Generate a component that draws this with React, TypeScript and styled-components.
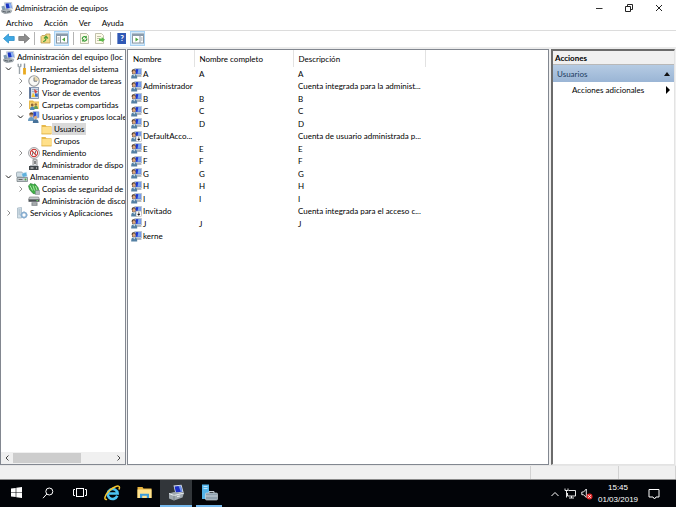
import React from "react";
import styled, { createGlobalStyle, css } from "styled-components";

const GlobalStyle = createGlobalStyle`
  * { box-sizing: border-box; }
  html, body, #root { height: 100%; margin: 0; }
  body {
    background: #f0f0f0;
    color: #000;
    font: 8px/12px Lato, "Open Sans", sans-serif;
    overflow: hidden;
  }
  button { font: inherit; color: inherit; border: 0; padding: 0; margin: 0; background: none; }
  svg { display: block; flex: none; }
`;

const Desktop = styled.div`
  display: flex;
  flex-direction: column;
  height: 100vh;
`;

const TitleBar = styled.header`
  display: flex;
  align-items: center;
  height: 15px;
  padding: 0 2px 0 1px;
  gap: 2px;
  background: #fff;
`;

const Title = styled.h1`
  flex: 1;
  margin: 0;
  font-size: 8px;
  font-weight: 400;
`;

const CaptionGroup = styled.div`
  display: flex;
`;

const CaptionButton = styled.button`
  display: flex;
  align-items: center;
  justify-content: center;
  width: 30px;
  height: 14px;
`;

const MenuBar = styled.nav`
  display: flex;
  align-items: center;
  height: 15px;
  padding-left: 6px;
  gap: 11px;
  background: #fff;
`;

const ToolBar = styled.div`
  display: flex;
  align-items: center;
  height: 19px;
  padding: 0 1px 1px 2px;
  gap: 2px;
  background: #fff;
  border-top: 1px solid #dcdcdc;
  border-bottom: 2px solid #ececec;
`;

const ToolButton = styled.button<{ $active?: boolean }>`
  display: flex;
  align-items: center;
  justify-content: center;
  width: ${(p) => (p.$active ? 15 : 13)}px;
  height: 15px;
  ${(p) =>
    p.$active &&
    css`
      background: #d5eafb;
      border: 1px solid #a9d3f5;
    `}
`;

const ToolDivider = styled.span`
  width: 1px;
  height: 13px;
  margin: 0 2px;
  background: #b4b4b4;
`;

const Workspace = styled.main`
  flex: 1;
  min-height: 0;
  display: grid;
  grid-template-columns: 126px minmax(0, 1fr) 124px;
  column-gap: 1px;
  padding-right: 1px;
`;

const Pane = styled.section`
  display: flex;
  flex-direction: column;
  min-width: 0;
  background: #fff;
  border: 1px solid #828790;
  overflow: hidden;
`;

const ListPane = styled(Pane)`
  margin-right: 1px;
`;

const ActionsPane = styled(Pane)`
  border-color: #6b6b6b #e3e3e3 #e3e3e3 #6b6b6b;
  border-width: 2px 1px 1px 2px;
`;

const Tree = styled.ul`
  flex: 1;
  margin: 0;
  padding: 1px 0 0;
  list-style: none;
`;

const TreeRow = styled.li<{ $level: number }>`
  display: flex;
  align-items: center;
  height: 12px;
  padding-left: ${(p) => (p.$level === 0 ? 2 : p.$level * 12 - 9)}px;
  white-space: nowrap;
`;

const Twisty = styled.button`
  flex: none;
  display: flex;
  align-items: center;
  justify-content: center;
  width: 9px;
  height: 12px;
  margin-right: 3px;
`;

const TwistySpace = styled.span`
  flex: none;
  width: 12px;
`;

const TreeIcon = styled.span`
  flex: none;
  display: flex;
  align-items: center;
  justify-content: center;
  width: 12px;
  height: 12px;
`;

const TreeLabel = styled.span<{ $selected?: boolean }>`
  height: 12px;
  padding: 0 2px;
  ${(p) => p.$selected && "background: #d9d9d9;"}
`;

const ScrollBar = styled.div`
  display: flex;
  align-items: center;
  height: 12px;
  background: #f0f0f0;
`;

const ScrollArrow = styled.button`
  display: flex;
  align-items: center;
  justify-content: center;
  width: 12px;
  height: 12px;
`;

const ScrollTrack = styled.div`
  flex: 1;
  height: 10px;
`;

const ScrollThumb = styled.div`
  width: 68%;
  height: 10px;
  background: #cdcdcd;
`;

const UserTable = styled.table`
  width: 297px;
  table-layout: fixed;
  border-collapse: collapse;
`;

const HeadCell = styled.th<{ $width: number }>`
  width: ${(p) => p.$width}px;
  height: 17px;
  padding: 1px 0 0 5px;
  text-align: left;
  font-weight: 400;
  border-right: 1px solid #e2e2e2;
`;

const UserRow = styled.tr`
  height: 12px;
  &:nth-child(odd) { height: 13px; }
`;

const Cell = styled.td`
  padding: 0 0 0 5px;
  line-height: 12px;
  white-space: nowrap;
`;

const NameCell = styled(Cell)`
  padding: 0 0 0 3px;
`;

const NameBox = styled.span`
  display: flex;
  align-items: center;
  gap: 1px;
`;

const ActionsHead = styled.h2`
  margin: 0;
  padding-left: 2px;
  height: 14px;
  line-height: 14px;
  font-size: 8px;
  font-weight: 700;
  background: #f0f0f0;
  border-bottom: 1px solid #b8b8b8;
`;

const ActionGroup = styled.button`
  display: flex;
  align-items: center;
  justify-content: space-between;
  height: 17px;
  padding: 0 4px;
  color: #1c3a5e;
  background: linear-gradient(#b5cbe3, #9ab5d5);
`;

const ActionItem = styled.button`
  display: flex;
  align-items: center;
  justify-content: space-between;
  height: 15px;
  padding: 0 4px 0 19px;
`;

const StatusBar = styled.footer`
  display: flex;
  height: 15px;
  border-top: 1px solid #e6e6e6;
  border-bottom: 1px solid #8a8a8a;
`;

const StatusCell = styled.span<{ $width?: number }>`
  ${(p) => (p.$width ? `width: ${p.$width}px;` : "flex: 1;")}
  border-right: 1px solid #d2d2d2;
`;

const TaskBar = styled.nav`
  display: flex;
  align-items: stretch;
  height: 27px;
  background: #020408;
  color: #fff;
`;

const TaskButton = styled.button<{ $running?: boolean; $focused?: boolean }>`
  display: flex;
  align-items: center;
  justify-content: center;
  width: 32px;
  border: solid transparent;
  border-width: 0 0 2px;
  ${(p) => p.$running && "border-bottom-color: #76b9ed;"}
  ${(p) => p.$focused && "background: #32363a;"}
`;

const AppButton = styled(TaskButton)`
  width: 26px;
  margin-left: 4px;
`;

const Tray = styled.div`
  display: flex;
  align-items: center;
  margin-left: auto;
  padding-right: 16px;
  gap: 5px;
`;

const TrayButton = styled.button`
  display: flex;
`;

const Clock = styled.time`
  width: 40px;
  margin-right: 5px;
  text-align: center;
  font-family: "Liberation Sans", Arial, sans-serif;
  white-space: nowrap;
`;

type IconProps = { size?: number };

const ComputerIcon = ({ size = 12 }: IconProps) => (
  <svg width={size} height={size} viewBox="0 0 16 16">
    <path d="M4.500 1l9.500-.5 1.500 8.500-9 1.500z" fill="#e3eaf1" stroke="#9aa9b6" strokeWidth=".7" />
    <path d="M6 2l7-.5 1.200 6.300-7 1.200z" fill="#1c36c4" />
    <path d="M10 1.700l3-.2 1.200 6.300-2.500.4z" fill="#8fb4f0" />
    <path d="M.5 6l4-1.500 1.500 5.500-4 1z" fill="#7f9cb4" />
    <path d="M.5 11l6-1.500 8 2-1.500 2.800-8 1.200-4-2z" fill="#aab2b8" stroke="#767f86" strokeWidth=".6" />
    <path d="M2 12.500l5 1M8 13.500l4-.8" stroke="#4d555b" strokeWidth="1.200" />
  </svg>
);

const UserIcon = ({ disabled }: { disabled?: boolean }) => (
  <svg width="11" height="11" viewBox="0 0 12 12">
    <path d="M4 .5h7.500v7H5z" fill="#d9e3ee" stroke="#8c9db0" strokeWidth=".6" />
    <path d="M5 1.200h5.800v5.200H5z" fill="#1d36cf" />
    <path d="M8 1.200h2.800v5.200H7z" fill="#7da5ec" />
    <path d="M6 8h5l.5 1.500H6z" fill="#9aa4ad" />
    <path d="M.8 3.500C.8.8 5 .8 5 3.500L4.500 6.500h-3z" fill="#4a3728" />
    <ellipse cx="3.200" cy="4.500" rx="1.600" ry="2" fill="#dba67e" />
    <path d="M.2 11.500c0-4 1.300-4.700 3.200-4.700S6.800 7.500 6.800 11.500z" fill="#5480a3" />
    <path d="M2.500 7l1 2.200 1-2.200z" fill="#fff" />
    {disabled && (
      <g>
        <rect x="5.500" y="5.500" width="6" height="6" fill="#fff" stroke="#999" strokeWidth=".5" />
        <path d="M8.500 6.300v3M7.200 8.800h2.600l-1.300 1.500z" fill="#111" stroke="#111" strokeWidth=".6" />
      </g>
    )}
  </svg>
);

const GroupUsersIcon = () => (
  <svg width="12" height="12" viewBox="0 0 12 12">
    <path d="M5 .5l6 .3v6L5 7z" fill="#2a48cf" stroke="#b6c3d2" strokeWidth=".8" />
    <path d="M8 1l2.500.2v5.200H8z" fill="#83a9ed" />
    <circle cx="3.300" cy="4" r="2" fill="#c99a70" />
    <path d="M1.200 3.500c.3-3 4-3 4.300 0z" fill="#6a4b2d" />
    <path d="M0 10c0-3 1.500-4 3.300-4s3 1 3 4z" fill="#6d9cc0" />
    <circle cx="7.600" cy="6.500" r="1.700" fill="#d9aa80" />
    <path d="M4.800 12c0-3 1-3.800 2.800-3.800s3 .8 3 3.800z" fill="#47729a" />
  </svg>
);

const ToolsIcon = () => (
  <svg width="12" height="12" viewBox="0 0 12 12" fill="none">
    <path d="M2.200.8v2.400l1.300 1 1.300-1V.8M3.500 4v7" stroke="#9aa2a8" strokeWidth="1.400" />
    <path d="M8.500.5v5" stroke="#8d959c" strokeWidth="1.400" />
    <path d="M8.500 5V11.500" stroke="#e8a91f" strokeWidth="2.800" />
  </svg>
);

const ClockIcon = () => (
  <svg width="12" height="12" viewBox="0 0 12 12">
    <circle cx="6" cy="6" r="5.200" fill="#f8f8f5" stroke="#96999b" strokeWidth="1.100" />
    <path d="M6 6V1.500A4.500 4.500 0 0 1 10.500 6z" fill="#ead9ae" />
    <path d="M6 2.500V6.200h3" fill="none" stroke="#66717b" strokeWidth=".9" />
  </svg>
);

const EventIcon = () => (
  <svg width="12" height="12" viewBox="0 0 12 12">
    <rect x="1.500" y=".5" width="9" height="11" fill="#d5deea" stroke="#6f82a0" strokeWidth=".8" />
    <path d="M2.200 1v10" stroke="#4b6791" strokeWidth="1.500" />
    <path d="M4 2.500h6M4 4.500h6M4 9.500h6" stroke="#8799b5" strokeWidth=".7" />
    <path d="M6 2l3.500 2.500L7 7z" fill="#d8463c" />
    <path d="M5 5.500l2.500 4.500h-4z" fill="#f1c634" />
    <path d="M7 6.500h2.800v3H7z" fill="#3669c5" />
  </svg>
);

const FolderIcon = () => (
  <svg width="11" height="11" viewBox="0 0 11 11">
    <path d="M.5 1h4l1 1.200h5V10H.5z" fill="#e6b84a" />
    <path d="M1.200 3h9.300v6.800H1.200z" fill="#ffe08a" />
    <path d="M.5 10h10" stroke="#dcae41" strokeWidth=".8" />
  </svg>
);

const SharedIcon = () => (
  <svg width="12" height="12" viewBox="0 0 12 12">
    <path d="M1 1.500h4l1 1h5V10H1z" fill="#e7b94b" />
    <path d="M2 3.500h9v6.500H2z" fill="#fbd978" />
    <circle cx="4.200" cy="6" r="1.400" fill="#8c6439" />
    <circle cx="7.800" cy="5.500" r="1.300" fill="#9a7040" />
    <path d="M2 11c0-2.500.7-3.500 2.300-3.500S6.500 8.500 6.500 11z" fill="#4e89b2" />
    <path d="M6 10c0-2 .4-3.200 1.800-3.200S10 8 10 10z" fill="#5f9c58" />
  </svg>
);

const PerformanceIcon = () => (
  <svg width="12" height="12" viewBox="0 0 12 12" fill="none">
    <circle cx="6" cy="6" r="5.400" fill="#fff" stroke="#8d9194" strokeWidth=".9" />
    <circle cx="6" cy="6" r="3.600" stroke="#c9403b" strokeWidth="1.100" />
    <path d="M3.500 3.500l5 5" stroke="#c9403b" strokeWidth="1.300" />
    <path d="M4.500 8.200V5.500M7.500 6.500V4" stroke="#555" strokeWidth=".8" />
  </svg>
);

const DeviceIcon = () => (
  <svg width="12" height="12" viewBox="0 0 12 12">
    <rect x="5" y=".8" width="4" height="5.700" fill="#e4e6e8" stroke="#666" strokeWidth=".7" />
    <path d="M7 2v3" stroke="#222" />
    <rect x="1" y="7" width="9.500" height="4" fill="#41474b" />
    <path d="M2 6.500h8" stroke="#b8bec2" />
    <path d="M2.500 9h3M8 9h1" stroke="#eee" />
  </svg>
);

const StorageIcon = () => (
  <svg width="12" height="12" viewBox="0 0 12 12">
    <rect x=".5" y="1" width="6" height="5" rx="1" fill="#cfdce3" stroke="#8b9ba5" strokeWidth=".7" />
    <path d="M5.500 2.500l5-1.500.8 4.500-4.800 1z" fill="#5fb1dc" stroke="#e0eef5" strokeWidth=".6" />
    <path d="M1 6.500h10.500v4H1z" fill="#c2c9cd" stroke="#6f787d" strokeWidth=".7" />
    <path d="M2.500 8.500h4" stroke="#666" />
    <circle cx="9.500" cy="8.500" r=".9" fill="#49ad42" />
  </svg>
);

const BackupIcon = () => (
  <svg width="12" height="12" viewBox="0 0 12 12">
    <path d="M.5 3L2.500.5l3 1L7 .8l3 3.700 1 3.500-3 3-3-.5-3.500-4z" fill="#3fae46" stroke="#297a32" strokeWidth=".6" />
    <path d="M2 2.500l2.500 5M5 2.500l1.500 5M7.500 3l1.500 4" stroke="#bcebb0" strokeWidth=".9" />
    <path d="M7.500 7.500h4v4h-4z" fill="#b4bbbe" stroke="#7c8589" strokeWidth=".5" />
  </svg>
);

const DiskIcon = () => (
  <svg width="12" height="12" viewBox="0 0 12 12">
    <path d="M1.500 2h9l1 2.500H.5z" fill="#c5cacd" stroke="#777" strokeWidth=".6" />
    <path d="M.5 4.500h11v2.300H.5z" fill="#4b5155" />
    <path d="M3.500 7.300h6v3.500h-6z" fill="#80878b" />
    <path d="M4.500 9h4" stroke="#ddd" strokeWidth=".8" />
    <path d="M8.500 5.600H10" stroke="#6ed65e" />
  </svg>
);

const ServicesIcon = () => (
  <svg width="12" height="12" viewBox="0 0 12 12">
    <path d="M1.500 1l4-.5V11h-4z" fill="#d3e0e9" stroke="#9db1bf" strokeWidth=".7" />
    <path d="M2.500 3h2M2.500 5h2M2.500 7h2" stroke="#8aa2b1" strokeWidth=".7" />
    <circle cx="8" cy="8" r="2.500" fill="none" stroke="#88aed0" strokeWidth="1.600" />
    <path d="M8 4.300v1.200M8 10.500v1.200M4.300 8h1.200M10.500 8h1.200" stroke="#88aed0" />
  </svg>
);

const ArrowIcon = ({ forward }: { forward?: boolean }) => (
  <svg width="12" height="11" viewBox="0 0 12 11">
    <path
      d={forward ? "M11.500 5.500L6.500 1v2.500H.8v4h5.700V10z" : "M.5 5.500l5-4.500v2.500h5.700v4H5.500V10z"}
      fill={forward ? "#8d8d8d" : "#3ea8e4"}
      stroke={forward ? "#777" : "#2f8fca"}
      strokeWidth=".8"
    />
  </svg>
);

const UpFolderIcon = () => (
  <svg width="11" height="11" viewBox="0 0 11 11">
    <path d="M1 3.500l1-1h3L6 1h4v9H1z" fill="#f5da86" stroke="#b99a4c" strokeWidth=".8" />
    <path d="M3 8.500c2 0 3-1 3-4M4 5.500L6 3.200l2 2.300" fill="none" stroke="#4f9f3a" strokeWidth="1.200" />
  </svg>
);

const PanelIcon = ({ right }: { right?: boolean }) => (
  <svg width="12" height="11" viewBox="0 0 12 11">
    <rect x=".5" y="1" width="11" height="9" fill="#fff" stroke="#8d97a0" />
    <path d="M0 2h12" stroke="#8c9cac" strokeWidth="2" />
    <path d={right ? "M8 3v7" : "M4.500 3v7"} stroke="#8d97a0" />
    <path d={right ? "M3.500 4.500v4L6.500 6.500z" : "M9 4.500v4L6 6.500z"} fill="#47a43a" />
    <path d={right ? "M9 5h1.500M9 7h1.500" : "M1.500 5H3.500M1.500 7H3.500"} stroke="#7a8894" strokeWidth=".8" />
  </svg>
);

const SheetIcon = ({ exporting }: { exporting?: boolean }) => (
  <svg width="11" height="11" viewBox="0 0 11 11">
    <path d="M1.500.5h6l2 2v8h-8z" fill="#fdfbe8" stroke="#b3b29b" strokeWidth=".8" />
    {exporting ? (
      <g>
        <path d="M3 3.500h4M3 5.500h3M3 7.500h3" stroke="#a7a790" strokeWidth=".7" />
        <path d="M5 5.500h2.800V4L11 6.700 7.800 9.300V8H5z" fill="#5dbb4c" />
      </g>
    ) : (
      <g>
        <path d="M3.300 6A2.300 2.300 0 0 1 7 4M7.800 5.500A2.300 2.300 0 0 1 4 7.500" fill="none" stroke="#349b37" strokeWidth="1.200" />
        <path d="M7.800 2.500v2.700H5.300zM3.200 9V6.300h2.500z" fill="#349b37" />
      </g>
    )}
  </svg>
);

const HelpGlyph = styled.span`
  width: 9px;
  height: 11px;
  background: #3159b5;
  border-left: 1px solid #7893cf;
  color: #fff;
  font-weight: 700;
  line-height: 11px;
  text-align: center;
`;

const Chevron = ({ d, color = "#444" }: { d: string; color?: string }) => (
  <svg width="8" height="8" viewBox="0 0 8 8" fill="none" stroke={color}>
    <path d={d} />
  </svg>
);

const DOWN = "M1 2.500L3.500 5 6 2.500";
const RIGHT = "M2.500 1.500L5 4 2.500 6.500";
const LEFT = "M5.500 1.500L3 4l2.500 2.500";
const UP = "M.5 6L4 2.500 7.500 6";

const WindowsIcon = () => (
  <svg width="11" height="11" viewBox="0 0 11 11" fill="#fff">
    <path d="M0 1.500L4.700.9v4.300H0zM5.300.8L11 0v5.200H5.300zM0 5.800h4.700v4.300L0 9.500zM5.300 5.800H11V11l-5.700-.8z" />
  </svg>
);

const SearchIcon = () => (
  <svg width="12" height="12" viewBox="0 0 12 12" fill="none" stroke="#fff">
    <circle cx="7.300" cy="4.500" r="3.500" />
    <path d="M4.800 7L1 11.200" />
  </svg>
);

const TaskViewIcon = () => (
  <svg width="14" height="11" viewBox="0 0 14 11" fill="none" stroke="#fff">
    <rect x="3.500" y="1.500" width="7" height="8" />
    <path d="M2 2.500H.5v6H2M12 2.500h1.500v6H12" />
  </svg>
);

const InternetExplorerIcon = () => (
  <svg width="17" height="16" viewBox="0 0 17 16" fill="none">
    <path d="M13.300 10.800A5 5 0 1 1 13.600 8.500H5" stroke="#4cc3f2" strokeWidth="2.600" />
    <path d="M3 14.200C-.5 15.500.5 10.500 5 6 9.500 1.500 15.500-.5 15.500 2.500c0 .8-.3 1.500-.7 2" stroke="#f6c62e" strokeWidth="1.500" />
  </svg>
);

const FileExplorerIcon = () => (
  <svg width="15" height="13" viewBox="0 0 15 13">
    <path d="M.5 1h5l1 1.500h8V12H.5z" fill="#e8b33e" />
    <path d="M.5 3.500h14V12H.5z" fill="#ffe38f" />
    <path d="M3 12V7.800h9V12H9.800V9.800H5.200V12z" fill="#3d9ddb" />
  </svg>
);

const ToolboxIcon = () => (
  <svg width="17" height="17" viewBox="0 0 17 17">
    <path d="M5.500 1.500l8-.8 2 7.500-8 1.500z" fill="#dde5ed" />
    <path d="M6.500 2.500l6.300-.7 1.500 5.700-6.300 1.200z" fill="#1b2fc4" />
    <path d="M10.500 2l2.300-.2 1.500 5.700-1.500.3z" fill="#6f92ea" />
    <path d="M1 9.500l5-1.500 10 1-1.500 4.500L6 16.500 1 14.500z" fill="#9fa8ae" />
    <path d="M1 9.500l5 2 10-2.500" stroke="#e8ecef" fill="none" />
    <path d="M6 11.500v5" stroke="#70787e" strokeWidth=".8" />
    <path d="M9 12.700l3-.7" stroke="#e3e7ea" strokeWidth="1.200" />
  </svg>
);

const ServerManagerIcon = () => (
  <svg width="17" height="17" viewBox="0 0 17 17">
    <path d="M1 .5h7V15H1z" fill="#54b4ea" />
    <path d="M2.500 2.500H6.500M2.500 4.500H6.500" stroke="#d8f1ff" strokeWidth=".8" />
    <path d="M8 9V7.500h5V9" fill="none" stroke="#c2cbd2" />
    <rect x="4.500" y="9" width="12" height="7" rx="1" fill="#8fa0ad" stroke="#d7e0e6" strokeWidth=".6" />
    <path d="M4.500 12h12" stroke="#d7e0e6" strokeWidth=".8" />
  </svg>
);

const NetworkIcon = () => (
  <svg width="12" height="11" viewBox="0 0 12 11" fill="none" stroke="#fff">
    <path d="M4.500 2.500h7v5.500H3.500V5M5 10h5M7.500 8v2" strokeWidth=".9" />
    <path d="M1 .5v2h3v-2M2.500 2.500v7" strokeWidth=".9" />
  </svg>
);

const MutedIcon = () => (
  <svg width="12" height="12" viewBox="0 0 12 12" fill="none">
    <path d="M.8 4h1.700l2.800-3v8.500L2.500 6.700H.8z" stroke="#fff" strokeWidth=".9" />
    <circle cx="8.500" cy="8.500" r="3" fill="#df2b2b" />
    <path d="M7.300 7.300l2.400 2.400M9.700 7.300L7.300 9.700" stroke="#fff" />
  </svg>
);

const NotificationIcon = () => (
  <svg width="12" height="12" viewBox="0 0 12 12" fill="none" stroke="#fff">
    <path d="M1 1.500h10v7.500H8L6.500 11 5 9H1z" />
  </svg>
);

type TreeItem = {
  label: string;
  level: number;
  icon: React.ReactNode;
  state?: "open" | "closed";
  selected?: boolean;
};

const treeItems: TreeItem[] = [
  { label: "Administración del equipo (loc", level: 0, icon: <ComputerIcon /> },
  { label: "Herramientas del sistema", level: 1, icon: <ToolsIcon />, state: "open" },
  { label: "Programador de tareas", level: 2, icon: <ClockIcon />, state: "closed" },
  { label: "Visor de eventos", level: 2, icon: <EventIcon />, state: "closed" },
  { label: "Carpetas compartidas", level: 2, icon: <SharedIcon />, state: "closed" },
  { label: "Usuarios y grupos locale", level: 2, icon: <GroupUsersIcon />, state: "open" },
  { label: "Usuarios", level: 3, icon: <FolderIcon />, selected: true },
  { label: "Grupos", level: 3, icon: <FolderIcon /> },
  { label: "Rendimiento", level: 2, icon: <PerformanceIcon />, state: "closed" },
  { label: "Administrador de dispo", level: 2, icon: <DeviceIcon /> },
  { label: "Almacenamiento", level: 1, icon: <StorageIcon />, state: "open" },
  { label: "Copias de seguridad de", level: 2, icon: <BackupIcon />, state: "closed" },
  { label: "Administración de disco", level: 2, icon: <DiskIcon /> },
  { label: "Servicios y Aplicaciones", level: 1, icon: <ServicesIcon />, state: "closed" },
];

type User = { name: string; full?: string; description?: string; disabled?: boolean };

const same = (name: string): User => ({ name, full: name, description: name });

const users: User[] = [
  same("A"),
  { name: "Administrador", description: "Cuenta integrada para la administ..." },
  same("B"),
  same("C"),
  same("D"),
  { name: "DefaultAcco...", description: "Cuenta de usuario administrada p...", disabled: true },
  same("E"),
  same("F"),
  same("G"),
  same("H"),
  same("I"),
  { name: "Invitado", description: "Cuenta integrada para el acceso c...", disabled: true },
  same("J"),
  { name: "kerne" },
];

export default function App() {
  return (
    <Desktop>
      <GlobalStyle />
      <TitleBar>
        <ComputerIcon />
        <Title>Administración de equipos</Title>
        <CaptionGroup>
          <CaptionButton aria-label="Minimizar">
            <svg width="8" height="8" stroke="#333"><path d="M1 4.500h6.500" /></svg>
          </CaptionButton>
          <CaptionButton aria-label="Restaurar">
            <svg width="8" height="8" fill="none" stroke="#222">
              <path d="M.5 2.500h5v5h-5zM2.500 2.500v-2h5v5h-2" />
            </svg>
          </CaptionButton>
          <CaptionButton aria-label="Cerrar">
            <svg width="8" height="8" stroke="#222"><path d="M1 1l6 6M7 1L1 7" /></svg>
          </CaptionButton>
        </CaptionGroup>
      </TitleBar>
      <MenuBar>
        {["Archivo", "Acción", "Ver", "Ayuda"].map((m) => (
          <button key={m}>{m}</button>
        ))}
      </MenuBar>
      <ToolBar>
        <ToolButton aria-label="Atrás"><ArrowIcon /></ToolButton>
        <ToolButton aria-label="Adelante"><ArrowIcon forward /></ToolButton>
        <ToolDivider />
        <ToolButton aria-label="Subir un nivel"><UpFolderIcon /></ToolButton>
        <ToolButton $active aria-label="Árbol de consola"><PanelIcon /></ToolButton>
        <ToolDivider />
        <ToolButton aria-label="Actualizar"><SheetIcon /></ToolButton>
        <ToolButton aria-label="Exportar lista"><SheetIcon exporting /></ToolButton>
        <ToolDivider />
        <ToolButton aria-label="Ayuda"><HelpGlyph>?</HelpGlyph></ToolButton>
        <ToolButton $active aria-label="Panel de acciones"><PanelIcon right /></ToolButton>
      </ToolBar>
      <Workspace>
        <Pane>
          <Tree>
            {treeItems.map((item) => (
              <TreeRow key={item.label} $level={item.level}>
                {item.state && (
                  <Twisty aria-label={item.label}>
                    <Chevron
                      d={item.state === "open" ? DOWN : RIGHT}
                      color={item.state === "open" ? "#222" : "#909090"}
                    />
                  </Twisty>
                )}
                {!item.state && item.level > 0 && <TwistySpace />}
                <TreeIcon>{item.icon}</TreeIcon>
                <TreeLabel $selected={item.selected}>{item.label}</TreeLabel>
              </TreeRow>
            ))}
          </Tree>
          <ScrollBar>
            <ScrollArrow aria-label="Desplazar a la izquierda"><Chevron d={LEFT} /></ScrollArrow>
            <ScrollTrack><ScrollThumb /></ScrollTrack>
            <ScrollArrow aria-label="Desplazar a la derecha"><Chevron d={RIGHT} /></ScrollArrow>
          </ScrollBar>
        </Pane>
        <ListPane>
          <UserTable>
            <thead>
              <tr>
                <HeadCell $width={66}>Nombre</HeadCell>
                <HeadCell $width={99}>Nombre completo</HeadCell>
                <HeadCell $width={132}>Descripción</HeadCell>
              </tr>
            </thead>
            <tbody>
              {users.map((u) => (
                <UserRow key={u.name}>
                  <NameCell>
                    <NameBox><UserIcon disabled={u.disabled} />{u.name}</NameBox>
                  </NameCell>
                  <Cell>{u.full}</Cell>
                  <Cell>{u.description}</Cell>
                </UserRow>
              ))}
            </tbody>
          </UserTable>
        </ListPane>
        <ActionsPane>
          <ActionsHead>Acciones</ActionsHead>
          <ActionGroup>
            Usuarios
            <svg width="6" height="4"><path d="M0 4l3-4 3 4z" fill="#111" /></svg>
          </ActionGroup>
          <ActionItem>
            Acciones adicionales
            <svg width="4" height="8"><path d="M0 0l4 4-4 4z" fill="#000" /></svg>
          </ActionItem>
        </ActionsPane>
      </Workspace>
      <StatusBar>
        <StatusCell />
        <StatusCell $width={88} />
        <StatusCell $width={57} />
      </StatusBar>
      <TaskBar>
        <TaskButton aria-label="Inicio"><WindowsIcon /></TaskButton>
        <TaskButton aria-label="Buscar"><SearchIcon /></TaskButton>
        <TaskButton aria-label="Vista de tareas"><TaskViewIcon /></TaskButton>
        <TaskButton aria-label="Internet Explorer"><InternetExplorerIcon /></TaskButton>
        <TaskButton aria-label="Explorador de archivos"><FileExplorerIcon /></TaskButton>
        <TaskButton $running $focused aria-label="Administración de equipos"><ToolboxIcon /></TaskButton>
        <AppButton $running aria-label="Administrador del servidor"><ServerManagerIcon /></AppButton>
        <Tray>
          <TrayButton aria-label="Iconos ocultos"><Chevron d={UP} color="#fff" /></TrayButton>
          <TrayButton aria-label="Red"><NetworkIcon /></TrayButton>
          <TrayButton aria-label="Volumen"><MutedIcon /></TrayButton>
          <Clock>15:45<br />01/03/2019</Clock>
          <TrayButton aria-label="Notificaciones"><NotificationIcon /></TrayButton>
        </Tray>
      </TaskBar>
    </Desktop>
  );
}
